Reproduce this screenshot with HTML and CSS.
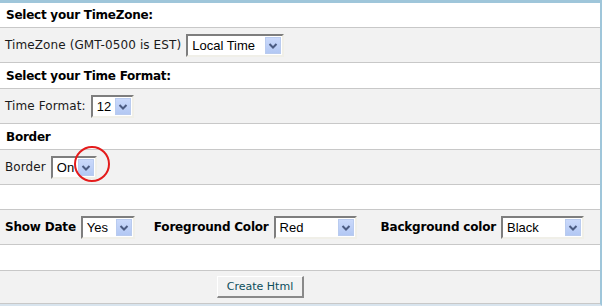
FILE: index.html
```html
<!DOCTYPE html>
<html lang="en">

<head>
  <meta charset="UTF-8">
  <title>Clock Settings</title>
  <link rel="stylesheet" href="styles.css">
</head>

<body>
  <div class="panel">
    <div class="row head first">Select your TimeZone:</div>
    <div class="row ctrl">
      <span class="label">TimeZone (GMT-0500 is EST)</span>
      <div class="select tz"><span class="value">Local Time</span><span class="arrow"><svg width="16" height="17" viewBox="0 0 16 17"><path d="M4.5 7 L8 10.5 L11.5 7" fill="none" stroke="#4b5b82" stroke-width="2"/></svg></span></div>
    </div>
    <div class="row head">Select your Time Format:</div>
    <div class="row ctrl">
      <span class="label">Time Format:</span>
      <div class="select fmt"><span class="value">12</span><span class="arrow"><svg width="16" height="17" viewBox="0 0 16 17"><path d="M4.5 7 L8 10.5 L11.5 7" fill="none" stroke="#4b5b82" stroke-width="2"/></svg></span></div>
    </div>
    <div class="row head">Border</div>
    <div class="row ctrl">
      <span class="label">Border</span>
      <div class="select border"><span class="value">On</span><span class="arrow"><svg width="16" height="17" viewBox="0 0 16 17"><path d="M4.5 7 L8 10.5 L11.5 7" fill="none" stroke="#4b5b82" stroke-width="2"/></svg></span></div>
    </div>
    <div class="row blank short"></div>
    <div class="row ctrl">
      <div class="group g-date">
        <span class="label bold">Show Date</span>
        <div class="select date"><span class="value">Yes</span><span class="arrow"><svg width="16" height="17" viewBox="0 0 16 17"><path d="M4.5 7 L8 10.5 L11.5 7" fill="none" stroke="#4b5b82" stroke-width="2"/></svg></span></div>
      </div>
      <div class="group g-fg">
        <span class="label bold">Foreground Color</span>
        <div class="select color"><span class="value">Red</span><span class="arrow"><svg width="16" height="17" viewBox="0 0 16 17"><path d="M4.5 7 L8 10.5 L11.5 7" fill="none" stroke="#4b5b82" stroke-width="2"/></svg></span></div>
      </div>
      <div class="group">
        <span class="label bold">Background color</span>
        <div class="select color"><span class="value">Black</span><span class="arrow"><svg width="16" height="17" viewBox="0 0 16 17"><path d="M4.5 7 L8 10.5 L11.5 7" fill="none" stroke="#4b5b82" stroke-width="2"/></svg></span></div>
      </div>
    </div>
    <div class="row blank"></div>
    <div class="row foot">
      <button class="create">Create Html</button>
    </div>
  </div>

  <!-- highlight ring drawn over the border dropdown -->
  <div class="marker"></div>
</body>

</html>
```

FILE: styles.css
```css
body {
  margin: 0;
  padding: 0;
  font-family: "DejaVu Sans", Verdana, sans-serif;
  font-size: 12px;
  color: #1a1a1a;
}

.panel {
  width: 600px;
  border-top: 3px solid #9fc6da;
  border-right: 2px solid #9fc6da;
  border-bottom: 2px solid #d8e4ee;
}

.row {
  display: flex;
  align-items: center;
  padding-left: 5px;
  border-bottom: 1px solid #c8c8c8;
  background-color: #ffffff;
}

.head {
  height: 25px;
  padding-left: 6px;
  font-weight: bold;
  letter-spacing: -0.25px;
  color: #000;
}

.head.first {
  height: 24px;
}

.ctrl {
  height: 34px;
  background-color: #f2f2f2;
}

.blank {
  height: 25px;
}

.blank.short {
  height: 24px;
}

.foot {
  height: 32px;
  background-color: #f2f2f2;
  padding-left: 217px;
}

.label {
  margin-right: 5px;
  white-space: nowrap;
  letter-spacing: 0.1px;
}

.label.bold {
  font-weight: bold;
  letter-spacing: -0.2px;
  color: #000;
}

.group {
  display: flex;
  align-items: center;
}

.g-date {
  margin-right: 19px;
}

.g-fg {
  margin-right: 24px;
}

.select {
  box-sizing: border-box;
  height: 23px;
  display: flex;
  align-items: center;
  justify-content: space-between;
  background-color: #fff;
  border-style: solid;
  border-width: 2px;
  border-color: #7e7e7e #f0efe8 #f0efe8 #7e7e7e;
  font-family: "Liberation Sans", Arial, sans-serif;
  font-size: 13px;
  color: #000;
}

.select .value {
  padding-left: 4px;
}

.select .arrow {
  display: block;
  width: 16px;
  height: 17px;
  margin-right: 1px;
  box-sizing: border-box;
  background: linear-gradient(#cad9fb, #b3c8f3);
  border: 1px solid #b9cbef;
}

.select .arrow svg {
  display: block;
  margin: -1px;
}

.tz {
  width: 98px;
}

.fmt {
  width: 43px;
}

.border {
  width: 46px;
}

.date {
  width: 54px;
}

.color {
  width: 83px;
}

.create {
  width: 87px;
  height: 22px;
  padding: 0;
  background-color: #f2f2f2;
  border-style: solid;
  border-width: 1px 2px 2px 1px;
  border-color: #ffffff #8a8a8a #8a8a8a #ffffff;
  font-family: "DejaVu Sans", Verdana, sans-serif;
  font-size: 11px;
  color: #0b4e5c;
}

.marker {
  position: absolute;
  left: 74px;
  top: 146px;
  width: 36px;
  height: 36px;
  box-sizing: border-box;
  border: 2px solid #e41b1b;
  border-radius: 50%;
}
```
